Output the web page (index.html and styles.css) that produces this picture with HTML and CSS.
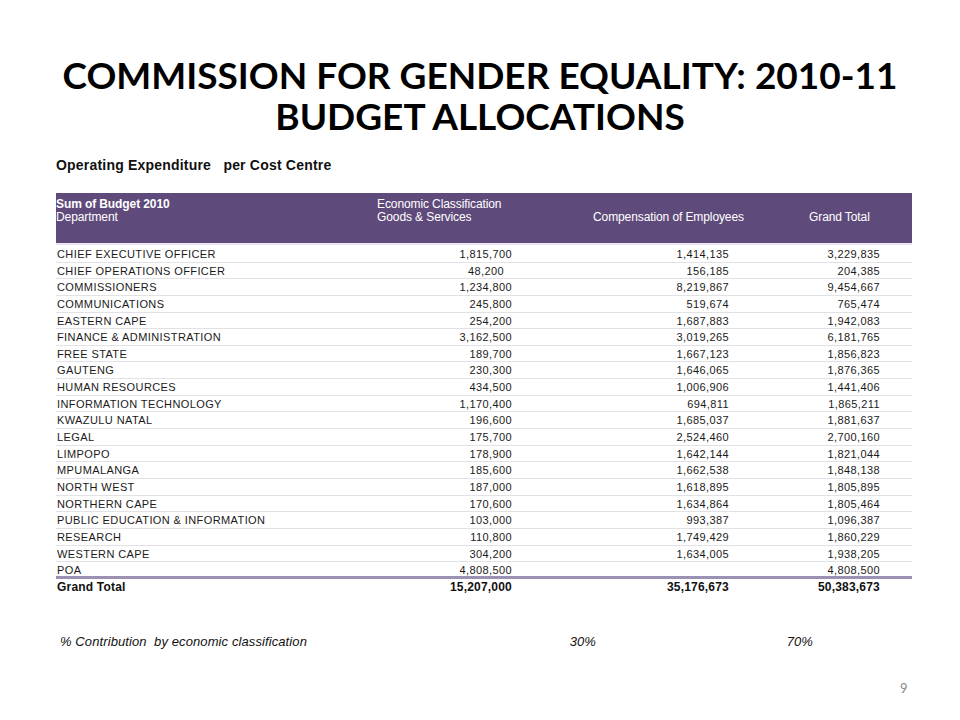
FILE: index.html
```html
<!DOCTYPE html>
<html>
<head>
<meta charset="utf-8">
<link rel="stylesheet" href="styles.css">
</head>
<body>
<div class="slide">
  <h1 class="title"><span class="tl">COMMISSION FOR GENDER EQUALITY: 2010-11</span><span class="tl">BUDGET ALLOCATIONS</span></h1>
  <div class="subtitle">Operating Expenditure&nbsp;&nbsp; per Cost Centre</div>
  <div class="pivot">
    <div class="head">
      <div class="hrow">
        <div class="hc c0 strong">Sum of Budget 2010</div>
        <div class="hc c1">Economic Classification</div>
      </div>
      <div class="hrow">
        <div class="hc c0">Department</div>
        <div class="hc c1">Goods &amp; Services</div>
        <div class="hc c2">Compensation of Employees</div>
        <div class="hc c3">Grand Total</div>
      </div>
    </div>
    <div class="body">
      <div class="row"><span class="d">CHIEF EXECUTIVE OFFICER</span><span class="n">1,815,700</span><span class="n">1,414,135</span><span class="n">3,229,835</span></div>
      <div class="row"><span class="d">CHIEF OPERATIONS OFFICER</span><span class="n ind">48,200</span><span class="n">156,185</span><span class="n">204,385</span></div>
      <div class="row"><span class="d">COMMISSIONERS</span><span class="n">1,234,800</span><span class="n">8,219,867</span><span class="n">9,454,667</span></div>
      <div class="row"><span class="d">COMMUNICATIONS</span><span class="n">245,800</span><span class="n">519,674</span><span class="n">765,474</span></div>
      <div class="row"><span class="d">EASTERN CAPE</span><span class="n">254,200</span><span class="n">1,687,883</span><span class="n">1,942,083</span></div>
      <div class="row"><span class="d">FINANCE &amp; ADMINISTRATION</span><span class="n">3,162,500</span><span class="n">3,019,265</span><span class="n">6,181,765</span></div>
      <div class="row"><span class="d">FREE STATE</span><span class="n">189,700</span><span class="n">1,667,123</span><span class="n">1,856,823</span></div>
      <div class="row"><span class="d">GAUTENG</span><span class="n">230,300</span><span class="n">1,646,065</span><span class="n">1,876,365</span></div>
      <div class="row"><span class="d">HUMAN RESOURCES</span><span class="n">434,500</span><span class="n">1,006,906</span><span class="n">1,441,406</span></div>
      <div class="row"><span class="d">INFORMATION TECHNOLOGY</span><span class="n">1,170,400</span><span class="n">694,811</span><span class="n">1,865,211</span></div>
      <div class="row"><span class="d">KWAZULU NATAL</span><span class="n">196,600</span><span class="n">1,685,037</span><span class="n">1,881,637</span></div>
      <div class="row"><span class="d">LEGAL</span><span class="n">175,700</span><span class="n">2,524,460</span><span class="n">2,700,160</span></div>
      <div class="row"><span class="d">LIMPOPO</span><span class="n">178,900</span><span class="n">1,642,144</span><span class="n">1,821,044</span></div>
      <div class="row"><span class="d">MPUMALANGA</span><span class="n">185,600</span><span class="n">1,662,538</span><span class="n">1,848,138</span></div>
      <div class="row"><span class="d">NORTH WEST</span><span class="n">187,000</span><span class="n">1,618,895</span><span class="n">1,805,895</span></div>
      <div class="row"><span class="d">NORTHERN CAPE</span><span class="n">170,600</span><span class="n">1,634,864</span><span class="n">1,805,464</span></div>
      <div class="row"><span class="d">PUBLIC EDUCATION &amp; INFORMATION</span><span class="n">103,000</span><span class="n">993,387</span><span class="n">1,096,387</span></div>
      <div class="row"><span class="d">RESEARCH</span><span class="n">110,800</span><span class="n">1,749,429</span><span class="n">1,860,229</span></div>
      <div class="row"><span class="d">WESTERN CAPE</span><span class="n">304,200</span><span class="n">1,634,005</span><span class="n">1,938,205</span></div>
      <div class="row last"><span class="d">POA</span><span class="n">4,808,500</span><span class="n"></span><span class="n">4,808,500</span></div>
      <div class="row total"><span class="d">Grand Total</span><span class="n">15,207,000</span><span class="n">35,176,673</span><span class="n">50,383,673</span></div>
    </div>
  </div>
  <div class="contrib">
    <span class="cl">% Contribution&nbsp; by economic classification</span>
    <span class="cv">30%</span>
    <span class="cv">70%</span>
  </div>
  <div class="pagenum">9</div>
</div>
</body>
</html>
```
FILE: styles.css
```css
* { box-sizing: border-box; }
html, body { margin: 0; padding: 0; background: #fff; }
.slide {
  width: 960px;
  height: 720px;
  position: relative;
  overflow: hidden;
  font-family: "Liberation Sans", Arial, sans-serif;
  color: #111;
}
.title {
  margin: 0;
  padding-top: 54px;
  font-family: Lato, "Open Sans", sans-serif;
  font-weight: 700;
  font-size: 37px;
  text-align: center;
  color: #000;
}
.title .tl {
  display: block;
  height: 41px;
  line-height: 41px;
}
.subtitle {
  margin: 21px 0 0 56px;
  font-weight: 700;
  font-size: 14px;
  line-height: 16px;
  color: #111;
  letter-spacing: 0.2px;
}
.pivot {
  margin: 20px 0 0 56px;
  width: 856px;
  font-size: 11px;
  letter-spacing: 0.4px;
}
.head {
  background: #5f4b7b;
  color: #fff;
  height: 52px;
  padding-top: 5px;
  border-bottom: 2px solid #ece6f2;
}
.hrow {
  display: grid;
  grid-template-columns: 321px 145px 215px 153px 22px;
  line-height: 13px;
  font-size: 12px;
  letter-spacing: -0.1px;
}
.hc { white-space: nowrap; }
.hc.strong { font-weight: 700; }
.hc.c2 { padding-left: 71px; }
.hc.c3 { padding-left: 72px; }
.body { padding-top: 1px; }
.row {
  display: grid;
  grid-template-columns: 321px 145px 215px 153px 22px;
  height: 16.65px;
  line-height: 16px;
  border-bottom: 1px solid #e2e2e6;
  color: #1a1a1a;
}
.row .d { padding-left: 1px; white-space: nowrap; }
.row .n { text-align: right; padding-right: 10px; }
.row .n:nth-child(3) { padding-right: 8px; }
.row .n.ind { padding-right: 18px; }
.row.last { border-bottom: 3px solid #9b91b2; }
.row.total {
  border-bottom: none;
  height: 18px;
  line-height: 17px;
  font-weight: 700;
  font-size: 12px;
  letter-spacing: 0.2px;
  color: #111;
}
.contrib {
  display: grid;
  grid-template-columns: 290px 246px 217px;
  margin: 37px 0 0 60px;
  font-size: 13px;
  line-height: 16px;
  font-style: italic;
  letter-spacing: 0.1px;
  color: #111;
}
.cv { text-align: right; }
.pagenum {
  position: absolute;
  left: 900px;
  top: 680px;
  font-family: Lato, "Open Sans", sans-serif;
  font-size: 13px;
  color: #8a8a8a;
}
```
